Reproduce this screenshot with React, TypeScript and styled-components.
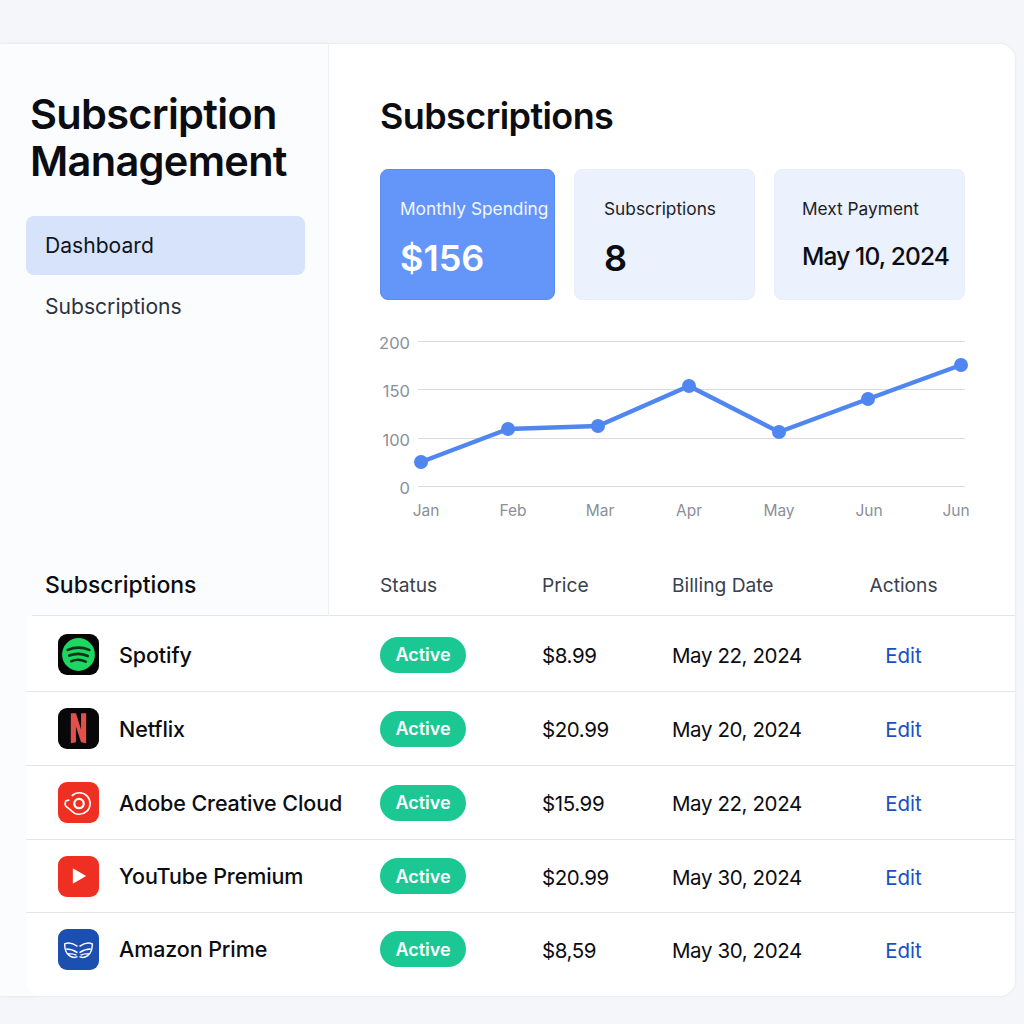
import React from "react";
import styled, { createGlobalStyle } from "styled-components";

const GlobalStyle = createGlobalStyle`
  html, body {
    margin: 0;
    background: #f4f6fa;
    font-family: "Inter", "Liberation Sans", sans-serif;
    color: #0b0d12;
  }
  * { box-sizing: border-box; }
`;

const Page = styled.div`
  width: 1024px;
  height: 1024px;
  padding: 44px 9px 28px 0;
  overflow: hidden;
`;

const Shell = styled.div`
  height: 952px;
  display: flex;
  flex-direction: column;
  background: #fbfcfe;
  border-radius: 0 16px 16px 0;
  box-shadow: 0 0 3px rgba(40, 50, 80, 0.1);
`;

const Upper = styled.div`
  height: 572px;
  display: flex;
`;

const Sidebar = styled.aside`
  width: 329px;
  flex: none;
  display: flex;
  flex-direction: column;
  padding-top: 47px;
  border-right: 1px solid #eef0f4;
`;

const AppTitle = styled.h1`
  margin: 0 0 31px 30px;
  font-size: 41.5px;
  line-height: 47px;
  font-weight: 600;
  letter-spacing: -0.7px;
`;

const NavItem = styled.div<{ $active?: boolean }>`
  width: 279px;
  height: ${(p) => (p.$active ? 59 : 60)}px;
  margin: 0 0 ${(p) => (p.$active ? 1 : 0)}px 26px;
  padding-left: 19px;
  display: flex;
  align-items: center;
  font-size: 21.1px;
  color: ${(p) => (p.$active ? "#10141c" : "#2a3340")};
  background: ${(p) => (p.$active ? "#d6e3fb" : "transparent")};
  border-radius: 8px;
`;

const SideHeading = styled.div`
  margin: auto 0 0 32px;
  height: 60px;
  padding: 0 0 2px 13px;
  display: flex;
  align-items: center;
  font-size: 23px;
  font-weight: 500;
  border-bottom: 1px solid #e3e5ea;
`;

const Main = styled.main`
  flex: 1;
  min-width: 0;
  display: flex;
  flex-direction: column;
  background: #fff;
  border-radius: 0 16px 0 0;
`;

const Overview = styled.div`
  padding: 50px 0 0 51px;
`;

const Heading = styled.h2`
  margin: 0 0 31px;
  font-size: 36px;
  line-height: 44px;
  font-weight: 600;
  letter-spacing: -0.6px;
`;

const Cards = styled.div`
  display: flex;
  gap: 19px;
`;

const StatCard = styled.div<{ $width: number; $inset: number; $primary?: boolean }>`
  width: ${(p) => p.$width}px;
  height: 131px;
  padding-top: 27px;
  padding-left: ${(p) => p.$inset}px;
  background: ${(p) => (p.$primary ? "#6496fa" : "#ebf1fd")};
  border: 1px solid ${(p) => (p.$primary ? "#5a8cf0" : "#e8eefb")};
  border-radius: 8px;
  color: ${(p) => (p.$primary ? "#fff" : "#0b0d12")};
  white-space: nowrap;
`;

const StatLabel = styled.div`
  font-size: 17.3px;
  line-height: 24px;
  opacity: 0.92;
`;

const StatValue = styled.div<{ $small?: boolean }>`
  margin-top: ${(p) => (p.$small ? 13 : 15)}px;
  font-size: ${(p) => (p.$small ? 24.5 : 36)}px;
  line-height: 44px;
  font-weight: ${(p) => (p.$small ? 500 : 600)};
  letter-spacing: ${(p) => (p.$small ? -0.85 : 0)}px;
`;

const ChartFrame = styled.svg`
  display: block;
  margin: 30px 0 0 -11px;
`;

const HeaderRow = styled.div`
  margin-top: auto;
  height: 60px;
  padding: 0 0 2px 51px;
  display: grid;
  grid-template-columns: 162px 130px 120px 223px;
  align-items: center;
  font-size: 19.2px;
  color: #39414e;
  border-bottom: 1px solid #e3e5ea;
`;

const ActionsHead = styled.div`
  text-align: center;
`;

const Rows = styled.section`
  flex: 1;
  margin-left: 26px;
  background: #fff;
  border-radius: 0 0 16px 16px;
`;

const Row = styled.div<{ $height: number }>`
  height: ${(p) => p.$height}px;
  padding-left: 32px;
  display: grid;
  grid-template-columns: 322px 162px 130px 120px 223px;
  align-items: center;
  border-bottom: 1px solid #e3e5ea;
  &:first-child {
    padding-top: 2px;
  }
  &:last-child {
    border-bottom: 0;
    padding-bottom: 11px;
  }
`;

const NameCell = styled.div`
  display: flex;
  align-items: center;
  gap: 20px;
  font-size: 21.5px;
  font-weight: 500;
  letter-spacing: -0.1px;
`;

const IconBox = styled.div<{ $bg: string }>`
  width: 41px;
  height: 41px;
  flex: none;
  background: ${(p) => p.$bg};
  border-radius: 9px;
  svg {
    display: block;
  }
`;

const Badge = styled.span`
  width: 86px;
  height: 36px;
  display: flex;
  align-items: center;
  justify-content: center;
  background: #1bc894;
  border-radius: 18px;
  color: #fff;
  font-size: 18px;
  font-weight: 600;
`;

const Cell = styled.div`
  padding-top: 2px;
  font-size: 20.5px;
  letter-spacing: -0.4px;
  white-space: nowrap;
`;

const EditLink = styled.a`
  padding-top: 2px;
  text-align: center;
  font-size: 20.5px;
  color: #1a4fc4;
`;

const gridLines = [
  { y: 341.5, label: "200" },
  { y: 389.5, label: "150" },
  { y: 438.5, label: "100" },
  { y: 486.5, label: "0" },
];
const months = [
  { x: 426, label: "Jan" },
  { x: 513, label: "Feb" },
  { x: 600, label: "Mar" },
  { x: 689, label: "Apr" },
  { x: 779, label: "May" },
  { x: 869, label: "Jun" },
  { x: 956, label: "Jun" },
];
const points = [
  [421, 462],
  [508, 429],
  [598, 426],
  [689, 386],
  [779, 432],
  [868, 399],
  [961, 365],
];

// svg is placed at x=369, y=330 on the page, coordinates below are page ones
const Chart = () => (
  <ChartFrame width={610} height={196} viewBox="369 330 610 196">
    {gridLines.map((g) => (
      <g key={g.label}>
        <line x1={418} x2={965} y1={g.y} y2={g.y} stroke="#d8dbe1" strokeWidth={1} />
        <text x={410} y={g.y + 7} textAnchor="end" fontSize={16.5} fill="#8a8f9a" fontFamily="Inter">
          {g.label}
        </text>
      </g>
    ))}
    {months.map((m, i) => (
      <text key={i} x={m.x} y={516} textAnchor="middle" fontSize={15.5} fill="#8a8f9a" fontFamily="Inter">
        {m.label}
      </text>
    ))}
    <polyline
      points={points.map((p) => p.join(",")).join(" ")}
      fill="none"
      stroke="#4f86f0"
      strokeWidth={4.5}
      strokeLinejoin="round"
    />
    {points.map((p) => (
      <circle key={p[0]} cx={p[0]} cy={p[1]} r={7} fill="#4f86f0" />
    ))}
  </ChartFrame>
);

const SpotifyIcon = () => (
  <svg width={41} height={41} viewBox="0 0 40 40" fill="none">
    <circle cx={20} cy={20} r={16} fill="#1ed760" />
    <g stroke="#10301d" strokeWidth={2.6} strokeLinecap="round">
      <path d="M9.5 15.5Q20 11 30.5 15.5" />
      <path d="M11 21Q20 17.5 29 21.5" />
      <path d="M13 26.5Q20 23.5 27 27" />
    </g>
  </svg>
);

const NetflixIcon = () => (
  <svg width={41} height={41} viewBox="0 0 40 40">
    <path d="M12.5 5H17.5L22.5 21V5H27.5V34.500L22.5 33.500L17.5 18V33.500L12.5 34.500Z" fill="#e2504a" />
  </svg>
);

const AdobeIcon = () => (
  <svg width={41} height={41} viewBox="0 0 40 40" fill="none" stroke="#fff">
    <path d="M13.500 13.500A10.500 10.500 0 1 1 13 28L7.500 23.500Q6.500 21 7.500 18.500L11 17.500" strokeWidth={1.6} />
    <circle cx={20.500} cy={21} r={4.600} strokeWidth={2.2} />
  </svg>
);

const YouTubeIcon = () => (
  <svg width={41} height={41} viewBox="0 0 40 40">
    <path d="M14.500 12L27.500 19.500L14.500 27Z" fill="#fff" />
  </svg>
);

const wing = "M19 17C15 14 10 13 6.500 14.500C6.500 19 8 24 11 26C14 28 17 28 19 27M8 19.500C12 19.500 16 21 19 23M10 24C13 24 16 24.500 18 25.500";

const PrimeIcon = () => (
  <svg width={41} height={41} viewBox="0 0 40 40" fill="none" stroke="#fff" strokeWidth={1.4}>
    <path d={wing} />
    <path d={wing} transform="matrix(-1 0 0 1 40 0)" />
  </svg>
);

const subscriptions = [
  { name: "Spotify", bg: "#050505", icon: <SpotifyIcon />, price: "$8.99", date: "May 22, 2024", height: 76 },
  { name: "Netflix", bg: "#08080a", icon: <NetflixIcon />, price: "$20.99", date: "May 20, 2024", height: 74 },
  { name: "Adobe Creative Cloud", bg: "#ee2f22", icon: <AdobeIcon />, price: "$15.99", date: "May 22, 2024", height: 74 },
  { name: "YouTube Premium", bg: "#ee2f22", icon: <YouTubeIcon />, price: "$20.99", date: "May 30, 2024", height: 73 },
  { name: "Amazon Prime", bg: "#1b4fb0", icon: <PrimeIcon />, price: "$8,59", date: "May 30, 2024", height: 83 },
];

const App: React.FC = () => {
  return (
    <Page>
      <GlobalStyle />
      <Shell>
        <Upper>
          <Sidebar>
            <AppTitle>
              Subscription
              <br />
              Management
            </AppTitle>
            <NavItem $active>Dashboard</NavItem>
            <NavItem>Subscriptions</NavItem>
            <SideHeading>Subscriptions</SideHeading>
          </Sidebar>
          <Main>
            <Overview>
              <Heading>Subscriptions</Heading>
              <Cards>
                <StatCard $width={175} $inset={19} $primary>
                  <StatLabel>Monthly Spending</StatLabel>
                  <StatValue>$156</StatValue>
                </StatCard>
                <StatCard $width={181} $inset={29}>
                  <StatLabel>Subscriptions</StatLabel>
                  <StatValue>8</StatValue>
                </StatCard>
                <StatCard $width={191} $inset={27}>
                  <StatLabel>Mext Payment</StatLabel>
                  <StatValue $small>May 10, 2024</StatValue>
                </StatCard>
              </Cards>
              <Chart />
            </Overview>
            <HeaderRow>
              <div>Status</div>
              <div>Price</div>
              <div>Billing Date</div>
              <ActionsHead>Actions</ActionsHead>
            </HeaderRow>
          </Main>
        </Upper>
        <Rows>
          {subscriptions.map((s) => (
            <Row key={s.name} $height={s.height}>
              <NameCell>
                <IconBox $bg={s.bg}>{s.icon}</IconBox>
                {s.name}
              </NameCell>
              <div>
                <Badge>Active</Badge>
              </div>
              <Cell>{s.price}</Cell>
              <Cell>{s.date}</Cell>
              <EditLink>Edit</EditLink>
            </Row>
          ))}
        </Rows>
      </Shell>
    </Page>
  );
};

export default App;
